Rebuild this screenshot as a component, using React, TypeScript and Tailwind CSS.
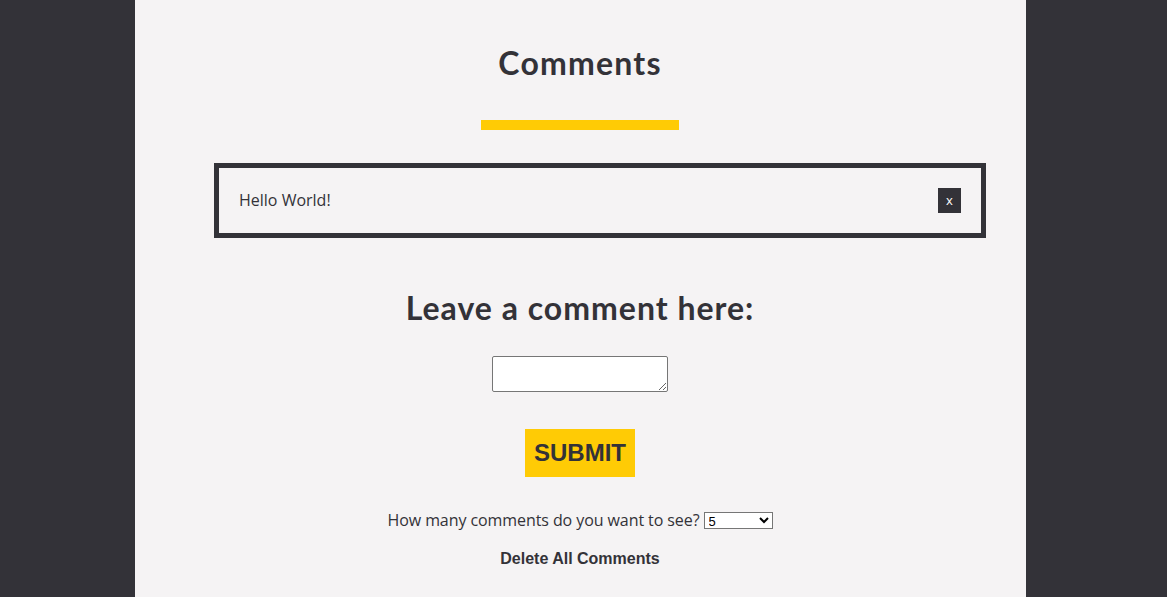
import React from "react";

export default function App() {
  return (
    <div className="min-h-[597px] bg-[#333238] flex">
      <div className="ml-[135px] w-[891px] min-h-[597px] bg-[#f5f3f4] flex flex-col items-center pr-[1px] text-[#333238] font-['Open_Sans',sans-serif]">
        <h1 className="mt-[43px] text-[32px] font-bold leading-[40px] font-['Lato',sans-serif] tracking-[1.2px]">
          Comments
        </h1>
        <div className="mt-[37px] w-[198px] h-[10px] bg-[#ffcb05]" />
        <div className="mt-[33px] self-start ml-[79px] w-[772px] h-[75px] border-[5px] border-[#333238] flex items-center justify-between px-[20px]">
          <span className="text-[16px] leading-[20px] -mt-[2px]">Hello World!</span>
          <button className="w-[23px] h-[25px] bg-[#333238] text-white text-[13px] leading-[25px]">
            x
          </button>
        </div>
        <h2 className="mt-[50px] text-[32px] font-bold leading-[40px] font-['Lato',sans-serif] tracking-[1px]">
          Leave a comment here:
        </h2>
        <textarea className="mt-[28px] w-[176px] h-[36px] border border-[#767676] bg-white rounded-[2px]" />
        <button className="mt-[37px] w-[110px] h-[48px] bg-[#ffcb05] font-['Liberation_Sans',Arial,sans-serif] font-bold text-[24px] leading-[48px]">
          SUBMIT
        </button>
        <div className="mt-[32px] flex items-center text-[16px] leading-[22px] tracking-[-0.08px]">
          <span>How many comments do you want to see?</span>
          <select className="ml-[4px] w-[69px] h-[17px] border border-[#767676] bg-white text-black font-['Liberation_Sans',Arial,sans-serif] text-[13px] leading-[15px] tracking-normal">
            <option>5</option>
          </select>
        </div>
        <button className="mt-[18px] font-['Liberation_Sans',Arial,sans-serif] font-bold text-[16px] leading-[20px]">
          Delete All Comments
        </button>
      </div>
    </div>
  );
}
